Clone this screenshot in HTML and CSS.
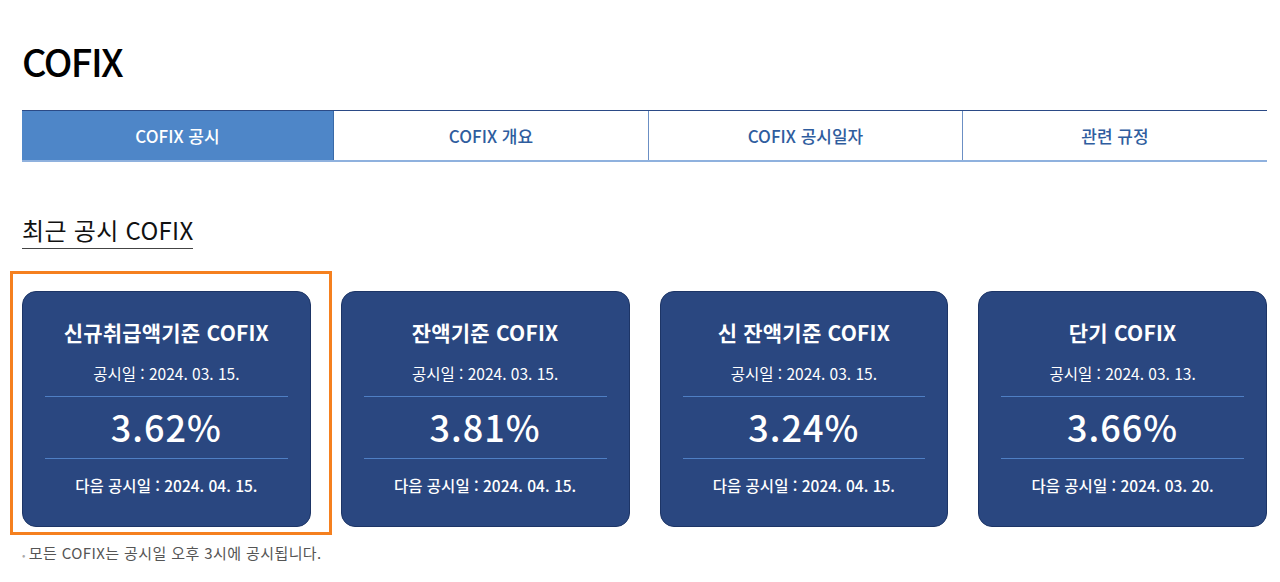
FILE: index.html
```html
<!DOCTYPE html>
<html lang="ko">
<head>
    <meta charset="UTF-8">
    <meta name="viewport" content="width=device-width, initial-scale=1.0">
    <title>COFIX</title>
    <link rel="stylesheet" href="styles.css">
</head>
<body>
    <div class="pagina">
        <h1 class="titulo">COFIX</h1>

        <div class="tabs">
            <div class="tab activo">COFIX 공시</div>
            <div class="tab">COFIX 개요</div>
            <div class="tab">COFIX 공시일자</div>
            <div class="tab">관련 규정</div>
        </div>

        <h2 class="subtitulo">최근 공시 COFIX</h2>

        <div class="tarjetas">
            <div class="tarjeta marcada">
                <div class="nombre">신규취급액기준 COFIX</div>
                <div class="fecha">공시일 : 2024. 03. 15.</div>
                <div class="valor">3.62%</div>
                <div class="proxima">다음 공시일 : 2024. 04. 15.</div>
            </div>
            <div class="tarjeta">
                <div class="nombre">잔액기준 COFIX</div>
                <div class="fecha">공시일 : 2024. 03. 15.</div>
                <div class="valor">3.81%</div>
                <div class="proxima">다음 공시일 : 2024. 04. 15.</div>
            </div>
            <div class="tarjeta">
                <div class="nombre">신 잔액기준 COFIX</div>
                <div class="fecha">공시일 : 2024. 03. 15.</div>
                <div class="valor">3.24%</div>
                <div class="proxima">다음 공시일 : 2024. 04. 15.</div>
            </div>
            <div class="tarjeta">
                <div class="nombre">단기 COFIX</div>
                <div class="fecha">공시일 : 2024. 03. 13.</div>
                <div class="valor">3.66%</div>
                <div class="proxima">다음 공시일 : 2024. 03. 20.</div>
            </div>
        </div>

        <p class="nota">모든 COFIX는 공시일 오후 3시에 공시됩니다.</p>
    </div>
</body>
</html>
```

FILE: styles.css
```css
body {
    margin: 0;
    background-color: white;
    font-family: "Noto Sans CJK KR", "Noto Sans", sans-serif;
    overflow: hidden;
}
.pagina {
    width: 1245px;
    padding: 0 0 0 22px;
}
.titulo {
    margin: 0 0 27px 0;
    padding-top: 38px;
    font-size: 38px;
    font-weight: 500;
    line-height: 45px;
    letter-spacing: -1.5px;
    color: black;
}

.tabs {
    display: grid;
    grid-template-columns: 312px 314px 314px 1fr;
    border-top: 1px solid #2b4a86;
    border-bottom: 2px solid #8fb1de;
}
.tab {
    height: 49px;
    line-height: 49px;
    text-align: center;
    font-size: 17px;
    font-weight: 500;
    color: #2f5d9e;
    border-left: 1px solid #6b8fc4;
}
.tab:first-child {
    border-left: none;
}
.tab.activo {
    background-color: #4e86c8;
    color: white;
    border-right: 1px solid #3a6aa8;
}
.tab.activo + .tab {
    border-left: none;
}

.subtitulo {
    display: inline-block;
    margin: 52px 0 0 0;
    padding-bottom: 2px;
    font-size: 24px;
    font-weight: 400;
    line-height: 32px;
    letter-spacing: 0.3px;
    color: #111;
    border-bottom: 1px solid #444;
}

.tarjetas {
    display: grid;
    grid-template-columns: repeat(4, 1fr);
    gap: 30px;
    margin-top: 42px;
}
.tarjeta {
    position: relative;
    height: 236px;
    box-sizing: border-box;
    padding: 25px 22px 0;
    background-color: #2a4780;
    border: 1px solid #1d3566;
    border-radius: 14px;
    color: white;
    text-align: center;
}
.tarjeta.marcada::after {
    content: "";
    position: absolute;
    top: -21px;
    left: -13px;
    right: -22px;
    bottom: -9px;
    border: 3px solid #f5801f;
}
.nombre {
    font-size: 21px;
    font-weight: 700;
    line-height: 30px;
    letter-spacing: 0.2px;
}
.fecha {
    margin-top: 14px;
    padding-bottom: 11px;
    font-size: 15.5px;
    line-height: 24px;
    border-bottom: 1px solid #4f7fc4;
}
.valor {
    height: 62px;
    box-sizing: border-box;
    padding-bottom: 4px;
    font-size: 36px;
    font-weight: 500;
    line-height: 58px;
    letter-spacing: 1px;
    border-bottom: 1px solid #4f7fc4;
}
.proxima {
    margin-top: 14px;
    font-size: 15.5px;
    font-weight: 500;
    line-height: 24px;
}

.nota {
    margin: 14px 0 0 0;
    font-size: 15px;
    line-height: 24px;
    letter-spacing: 0.4px;
    color: #555;
}
.nota::before {
    content: "•";
    color: #aaa;
    font-size: 10px;
    margin-right: 3px;
    vertical-align: middle;
}
```
